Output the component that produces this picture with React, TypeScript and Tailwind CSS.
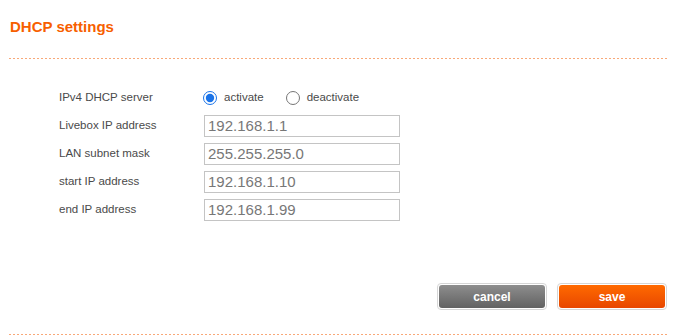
import { useState } from "react";

const fields = [
  { label: "Livebox IP address", value: "192.168.1.1" },
  { label: "LAN subnet mask", value: "255.255.255.0" },
  { label: "start IP address", value: "192.168.1.10" },
  { label: "end IP address", value: "192.168.1.99" },
];

function Dots() {
  return (
    <div className="h-px w-[658px] bg-[repeating-linear-gradient(to_right,#f8a878_0_2px,transparent_2px_4px)]" />
  );
}

export default function App() {
  const [dhcp, setDhcp] = useState("on");
  const [values, setValues] = useState(fields.map((f) => f.value));

  return (
    <div className="w-[690px] h-[336px] bg-white pl-[9px] pt-[18px] font-['Liberation_Sans',Arial,sans-serif]">
      <h2 className="text-[15px] leading-[18px] font-bold text-[#f75f00] pl-px">DHCP settings</h2>
      <div className="mt-[22px]">
        <Dots />
      </div>

      <div className="mt-[25px] pl-[50px]">
        <div className="flex items-center h-[28px]">
          <span className="w-[145px] text-[11.5px] text-[#4a4a4a]">IPv4 DHCP server</span>
          <label className="flex items-center gap-[7px] text-[11.5px] text-[#4a4a4a] ml-[-1px]">
            <input
              type="radio"
              name="dhcp"
              className="m-0 w-[14px] h-[14px] accent-[#1a73e8]"
              checked={dhcp === "on"}
              onChange={() => setDhcp("on")}
            />
            activate
          </label>
          <label className="flex items-center gap-[7px] text-[11.5px] text-[#4a4a4a] ml-[22px]">
            <input
              type="radio"
              name="dhcp"
              className="m-0 w-[14px] h-[14px] accent-[#1a73e8]"
              checked={dhcp === "off"}
              onChange={() => setDhcp("off")}
            />
            deactivate
          </label>
        </div>
        {fields.map((f, i) => (
          <div key={f.label} className="flex items-center h-[28px]">
            <span className="w-[145px] text-[11.5px] text-[#4a4a4a]">{f.label}</span>
            <input
              className="w-[196px] h-[22px] border border-[#c4c4c4] px-[3px] text-[15px] text-[#777] outline-none font-['Liberation_Sans',Arial,sans-serif]"
              value={values[i]}
              onChange={(e) =>
                setValues((prev) => prev.map((v, j) => (j === i ? e.target.value : v)))
              }
            />
          </div>
        ))}
      </div>

      <div className="mt-[59px] w-[658px] flex justify-end gap-[10px]">
        <button className="w-[110px] h-[27px] rounded-[4px] border border-[#d6d6d6] p-px bg-white">
          <span className="flex items-center justify-center h-full rounded-[3px] bg-gradient-to-b from-[#8e8e8e] to-[#626262] text-white text-[12px] font-bold">
            cancel
          </span>
        </button>
        <button className="w-[110px] h-[27px] rounded-[4px] border border-[#d6d6d6] p-px bg-white">
          <span className="flex items-center justify-center h-full rounded-[3px] bg-gradient-to-b from-[#ff6a00] to-[#e84600] text-white text-[12px] font-bold">
            save
          </span>
        </button>
      </div>

      <div className="mt-[24px]">
        <Dots />
      </div>
    </div>
  );
}
